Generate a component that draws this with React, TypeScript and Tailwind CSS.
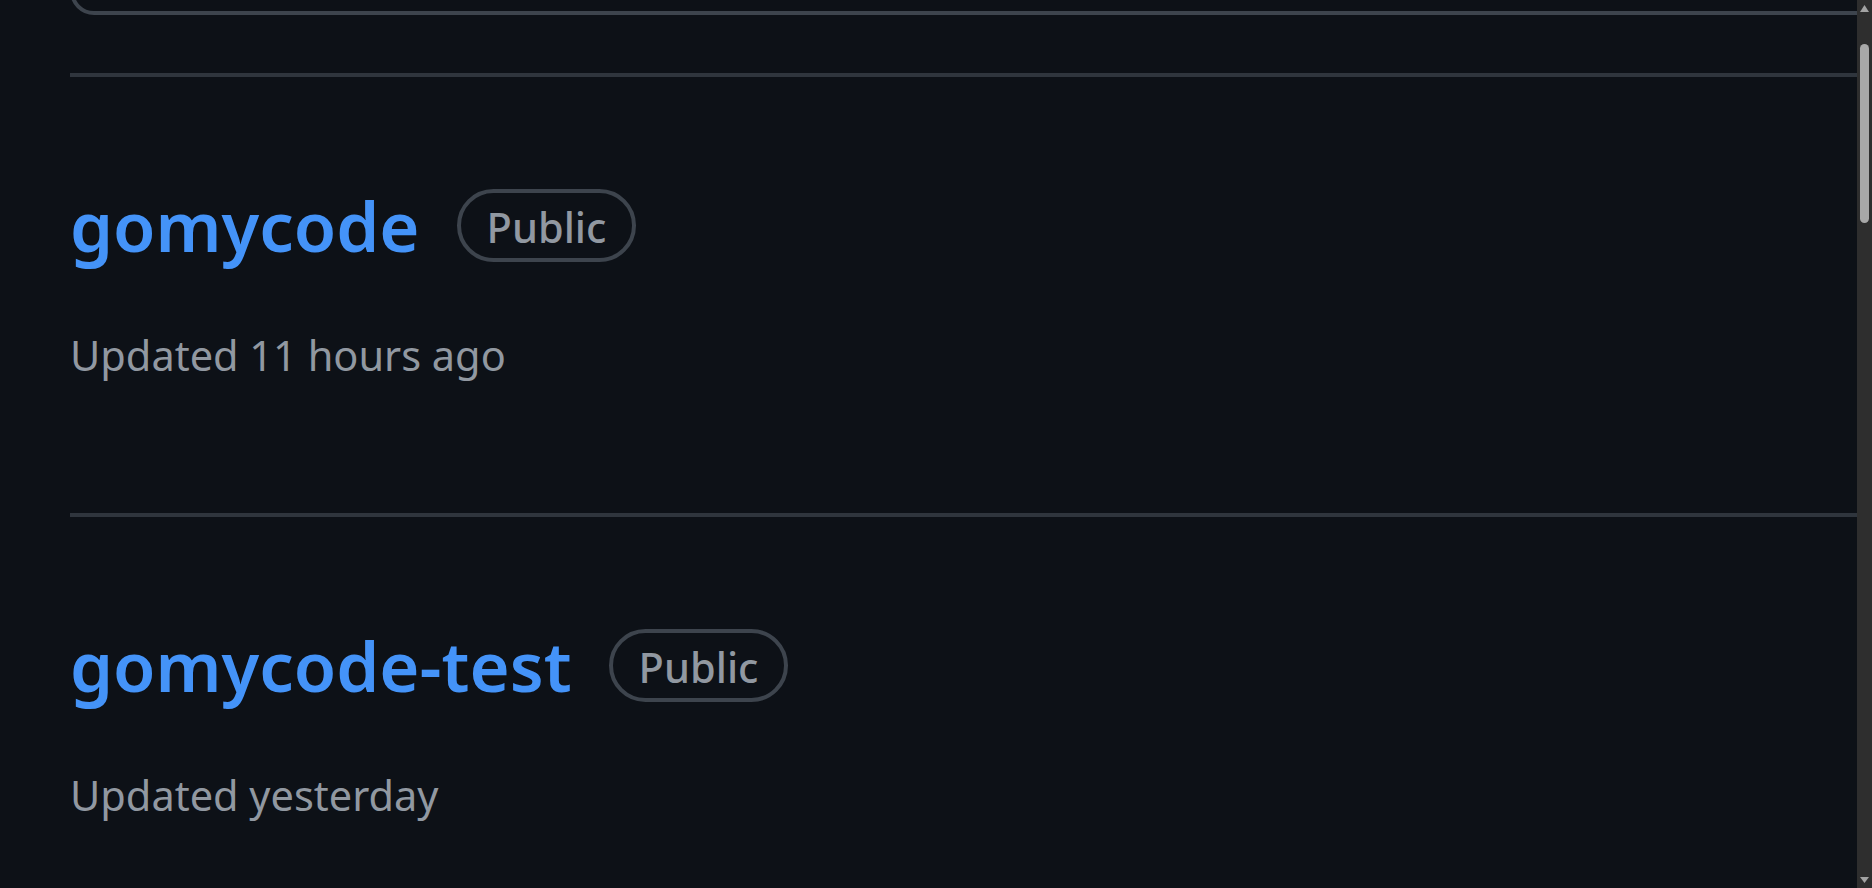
const repos = [
  { name: "gomycode", updated: "Updated 11 hours ago" },
  { name: "gomycode-test", updated: "Updated yesterday" },
];

const font = { fontFamily: '"Noto Sans", "Open Sans", sans-serif' };

const RepoRow = ({ name, updated }: { name: string; updated: string }) => (
  <li className="border-t-4 border-[#2f353d] pt-[98px] pb-[128px]">
    <div className="flex items-center">
      <a
        href="#"
        className="text-[68.8px] leading-[100px] font-semibold text-[#4493f8] whitespace-nowrap"
      >
        {name}
      </a>
      <span className="ml-[37px] box-border h-[73px] rounded-full border-4 border-[#3d444d] px-[26px] pt-[4px] text-[41.5px] leading-[61px] font-medium text-[#9198a1]">
        Public
      </span>
    </div>
    <p className="mt-[50px] text-[41.5px] leading-[60px] text-[#9198a1] whitespace-nowrap">
      {updated}
    </p>
  </li>
);

const Scrollbar = () => (
  <div className="flex w-[15px] shrink-0 flex-col items-center bg-[#2e2e2e]">
    <svg width="9" height="7" viewBox="0 0 9 7" className="mt-[5px]">
      <path d="M4.5 0 L9 7 L0 7 Z" fill="#a3a3a3" />
    </svg>
    <div className="mt-[32px] h-[179px] w-[9px] rounded-full bg-[#a8a8a8]" />
    <div className="flex-1" />
    <svg width="9" height="6" viewBox="0 0 9 6" className="mb-[5px]">
      <path d="M0 0 L9 0 L4.5 6 Z" fill="#a3a3a3" />
    </svg>
  </div>
);

export default function App() {
  return (
    <div className="flex h-[888px] w-full bg-[#0d1117]" style={font}>
      <main className="flex-1 overflow-hidden pl-[70px]">
        {/* bottom of the card above, mostly scrolled out of view */}
        <div className="flex h-[15px] flex-col justify-end overflow-hidden">
          <div className="h-[80px] w-[calc(100%+40px)] shrink-0 rounded-[24px] border-4 border-[#3d444d]" />
        </div>
        <ul className="mt-[58px]">
          {repos.map((r) => (
            <RepoRow key={r.name} name={r.name} updated={r.updated} />
          ))}
        </ul>
      </main>
      <Scrollbar />
    </div>
  );
}
